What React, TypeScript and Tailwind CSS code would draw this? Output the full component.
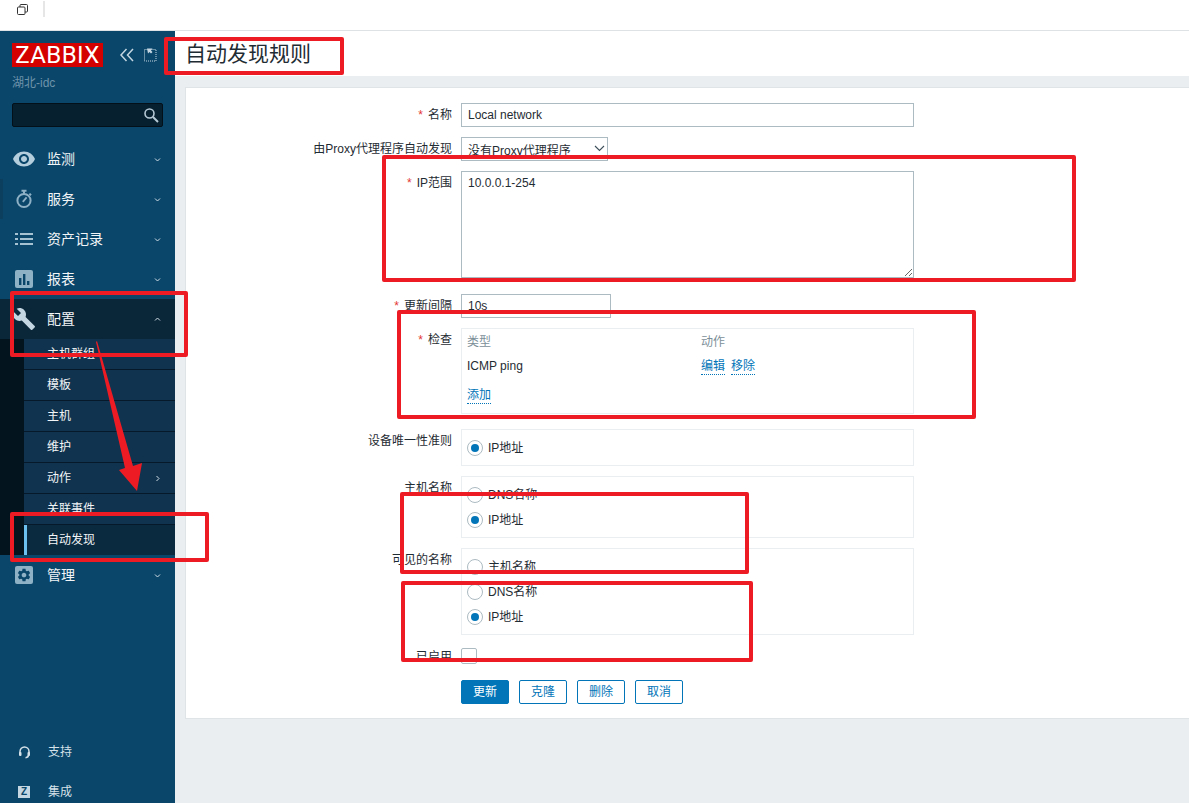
import React from 'react';

const FONT = { fontFamily: '"Liberation Sans", "Noto Sans CJK SC", sans-serif' };

const Chevron: React.FC<{ up?: boolean; right?: boolean }> = ({ up, right }) => (
  <svg width="9" height="9" viewBox="0 0 9 9" fill="none" stroke="#d0dde6" strokeWidth="1" className="shrink-0">
    {up ? <path d="M2 5.500 4.500 3 7 5.500" /> : right ? <path d="M3.500 2 6 4.500 3.500 7" /> : <path d="M2 3.500 4.500 6 7 3.500" />}
  </svg>
);

const icons: Record<string, React.ReactNode> = {
  eye: (
    <svg width="24" height="24" viewBox="0 0 24 24" fill="#b5cedd">
      <path d="M12 4.5C7 4.5 2.73 7.61 1 12c1.73 4.39 6 7.5 11 7.5s9.27-3.11 11-7.5c-1.73-4.39-6-7.5-11-7.5zM12 17c-2.76 0-5-2.24-5-5s2.24-5 5-5 5 2.24 5 5-2.24 5-5 5zm0-8c-1.66 0-3 1.34-3 3s1.34 3 3 3 3-1.34 3-3-1.34-3-3-3z" />
    </svg>
  ),
  timer: (
    <svg width="24" height="24" viewBox="0 0 24 24" fill="none" stroke="#8fb1c6" strokeWidth="2">
      <circle cx="12" cy="13.5" r="6.6" />
      <path d="M9.500 3.800h5M12 3.800v3M17.400 6.600l1.600 1.600" />
      <path d="M10.800 14.800l3.800-4.400" strokeWidth="1.800" />
    </svg>
  ),
  list: (
    <svg width="24" height="24" viewBox="0 0 24 24" fill="#a5c2d3">
      <rect x="3" y="6" width="3" height="2" />
      <rect x="8" y="6" width="13" height="2" />
      <rect x="3" y="11" width="3" height="2" />
      <rect x="8" y="11" width="13" height="2" />
      <rect x="3" y="16" width="3" height="2" />
      <rect x="8" y="16" width="13" height="2" />
    </svg>
  ),
  chart: (
    <svg width="24" height="24" viewBox="0 0 24 24">
      <rect x="3" y="3" width="18" height="18" rx="2" fill="#8fb1c6" />
      <path d="M7 11h2.400v7H7zM11 7h2.400v11H11zM15 14h2.400v4H15z" fill="#0a466a" />
    </svg>
  ),
  wrench: (
    <svg width="24" height="24" viewBox="0 0 24 24" fill="#c3d6e1">
      <path d="M22.7 19l-9.1-9.1c.9-2.3.4-5-1.5-6.9-2-2-5-2.400-7.400-1.300L9 6 6 9 1.600 4.700C.4 7.100.9 10.100 2.900 12.100c1.900 1.900 4.600 2.400 6.900 1.500l9.100 9.100c.4.4 1 .4 1.400 0l2.300-2.300c.5-.4.5-1.100.1-1.400z" />
    </svg>
  ),
  gear: (
    <svg width="24" height="24" viewBox="0 0 24 24">
      <rect x="3" y="3" width="18" height="18" rx="2" fill="#8fb1c6" />
      <g transform="translate(4.2 4.2) scale(0.65)">
        <path
          fill="#0a466a"
          d="M19.14 12.94c.04-.3.06-.61.06-.94 0-.32-.02-.64-.07-.94l2.03-1.58c.18-.14.23-.41.12-.61l-1.92-3.32c-.12-.22-.37-.29-.59-.22l-2.39.96c-.5-.38-1.03-.7-1.62-.94l-.36-2.54c-.04-.24-.24-.41-.48-.41h-3.84c-.24 0-.43.17-.47.41l-.36 2.54c-.59.24-1.13.57-1.62.94l-2.39-.96c-.22-.08-.47 0-.59.22L2.74 8.87c-.12.21-.08.47.12.61l2.03 1.58c-.05.3-.09.63-.09.94s.02.64.07.94l-2.03 1.58c-.18.14-.23.41-.12.61l1.92 3.32c.12.22.37.29.59.22l2.39-.96c.5.38 1.03.7 1.62.94l.36 2.54c.05.24.24.41.48.41h3.84c.24 0 .44-.17.47-.41l.36-2.54c.59-.24 1.13-.56 1.62-.94l2.39.96c.22.08.47 0 .59-.22l1.92-3.32c.12-.22.07-.47-.12-.61l-2.01-1.58zM12 15.6c-1.98 0-3.6-1.62-3.6-3.6s1.62-3.6 3.6-3.6 3.6 1.62 3.6 3.6-1.62 3.6-3.6 3.6z"
        />
      </g>
    </svg>
  ),
};

const NavItem: React.FC<{ icon: string; label: string; open?: boolean; mark?: boolean }> = ({ icon, label, open, mark }) => (
  <div className={`h-10 flex items-center pl-3 pr-[13px] text-sm text-[#f2f5f7] ${open ? 'bg-[#0a2639]' : ''} ${mark ? 'shadow-[inset_3px_0_0_#0c3e5d]' : ''}`}>
    <span className="w-[35px] shrink-0">{icons[icon]}</span>
    <span className="flex-1">{label}</span>
    <Chevron up={open} />
  </div>
);

const SubItem: React.FC<{ label: string; arrow?: boolean; active?: boolean; last?: boolean }> = ({ label, arrow, active, last }) => (
  <div
    className={`flex items-center pr-[13px] text-xs text-[#f2f5f7] ${last ? 'h-[30px]' : 'h-[31px] border-b border-[#06192a]'} ${
      active ? 'bg-[#0a2a3f] border-l-[3px] border-l-[#6cc0f0] pl-5' : 'bg-[#10344f] pl-[23px]'
    }`}
  >
    <span className="flex-1">{label}</span>
    {arrow && <Chevron right />}
  </div>
);

const Row: React.FC<{ label: string; required?: boolean; className?: string; children: React.ReactNode }> = ({ label, required, className, children }) => (
  <div className={`flex ${className ?? ''}`}>
    <div className="w-[275px] shrink-0 pr-[9px] h-6 leading-6 text-right text-xs text-[#1f2c33] whitespace-nowrap">
      {required && <span className="text-[#e33734] mr-[5px]">*</span>}
      {label}
    </div>
    <div className="min-w-0">{children}</div>
  </div>
);

const Radio: React.FC<{ label: string; checked?: boolean }> = ({ label, checked }) => (
  <div className="h-[25px] flex items-center gap-[5px] text-xs text-[#1f2c33]">
    <span className="w-4 h-4 rounded-full border border-[#acbbc2] flex items-center justify-center bg-white">
      {checked && <span className="w-2 h-2 rounded-full bg-[#0275b8]" />}
    </span>
    {label}
  </div>
);

const RadioBox: React.FC<{ children: React.ReactNode }> = ({ children }) => (
  <div className="w-[453px] border border-[#ebeef0] py-[5px] pl-[5px]">{children}</div>
);

const inputCls = 'block h-6 border border-[#acbbc2] px-1.5 text-xs text-[#1f2c33] bg-white outline-none';

const DotLink: React.FC<{ children: React.ReactNode }> = ({ children }) => (
  <span className="text-xs text-[#0275b8] border-b border-dotted border-[#0275b8] leading-[15px] inline-block">{children}</span>
);

const Btn: React.FC<{ children: React.ReactNode; primary?: boolean }> = ({ children, primary }) => (
  <button
    className={`w-12 h-6 rounded-[2px] text-xs border border-[#0275b8] ${primary ? 'bg-[#0275b8] text-white' : 'bg-white text-[#0275b8]'}`}
  >
    {children}
  </button>
);

const App: React.FC = () => {
  return (
    <div className="relative h-[803px] overflow-hidden flex flex-col bg-white" style={FONT}>
      {/* browser bar */}
      <div className="h-[31px] shrink-0 border-b border-[#dfe2e5] flex items-start pl-[17px] pt-[3px] gap-[15px]">
        <svg width="11" height="11" viewBox="0 0 11 11" fill="none" stroke="#333" strokeWidth="1" className="mt-px">
          <rect x="0.5" y="3" width="7.500" height="7.500" rx="1" />
          <path d="M3 3V1.500a1 1 0 0 1 1-1h5.500a1 1 0 0 1 1 1V7a1 1 0 0 1-1 1H8" />
        </svg>
        <div className="w-0.5 h-4 bg-[#e6e6e6] -mt-0.5" />
      </div>

      <div className="flex-1 flex min-h-0">
        {/* sidebar */}
        <aside className="w-[175px] shrink-0 bg-[#0a466a] flex flex-col overflow-hidden">
          <div className="h-[72px] shrink-0 pl-3 pt-3">
            <div className="flex items-center">
              <div className="w-[91px] h-6 bg-[#d40000] text-white text-2xl leading-6 text-center font-['Roboto',sans-serif] font-normal tracking-[0.4px]">ZABBIX</div>
              <svg width="16" height="16" viewBox="0 0 16 16" fill="none" stroke="#c3d6e1" strokeWidth="1.500" className="ml-4">
                <path d="M7.500 2 2 8l5.500 6M14 2 8.500 8l5.500 6" />
              </svg>
              <svg width="13" height="14" viewBox="0 0 13 14" fill="none" stroke="#c3d6e1" strokeWidth="1" className="ml-[9px]">
                <rect x="0.5" y="1.500" width="11.500" height="11.500" strokeDasharray="1 1" />
                <path d="M3 0.500h5.500L7 2.500l1.500 1.500L7 5.500 5.500 4 4 5.500z" fill="#c3d6e1" stroke="none" />
              </svg>
            </div>
            <div className="mt-[9px] text-xs leading-[14px] text-[#6d93aa]">湖北-idc</div>
          </div>
          <div className="mx-3 h-6 shrink-0 rounded-[2px] bg-[#06202f] border border-[#031019] flex items-center justify-end pr-[3px]">
            <svg width="16" height="16" viewBox="0 0 16 16" fill="none" stroke="#b5c9d5" strokeWidth="1.600">
              <circle cx="6.500" cy="6.500" r="4.500" />
              <path d="M10 10l5 5" strokeWidth="2" />
            </svg>
          </div>
          <nav className="mt-3 flex flex-col">
            <NavItem icon="eye" label="监测" />
            <NavItem icon="timer" label="服务" mark />
            <NavItem icon="list" label="资产记录" />
            <NavItem icon="chart" label="报表" />
            <NavItem icon="wrench" label="配置" open />
            <div className="flex">
              <div className="w-6 shrink-0 bg-[#04141e]" />
              <div className="flex-1 flex flex-col">
                <SubItem label="主机群组" />
                <SubItem label="模板" />
                <SubItem label="主机" />
                <SubItem label="维护" />
                <SubItem label="动作" arrow />
                <SubItem label="关联事件" />
                <SubItem label="自动发现" active last />
              </div>
            </div>
            <NavItem icon="gear" label="管理" />
          </nav>
          <div className="mt-auto flex flex-col -mb-[9px]">
            <div className="h-10 shrink-0 flex items-center pl-[18px] text-xs text-[#d5e1e8]">
              <svg width="13" height="13" viewBox="0 0 13 13" fill="none" stroke="#d5e1e8" strokeWidth="1.500" className="mr-[17px]">
                <path d="M2 7V5.500a4.500 4.500 0 0 1 9 0V7M10.500 9c0 1.500-1 2.500-3 2.700" />
                <rect x="1" y="6" width="2.500" height="4" rx="1" fill="#d5e1e8" stroke="none" />
                <rect x="9.500" y="6" width="2.500" height="4" rx="1" fill="#d5e1e8" stroke="none" />
              </svg>
              支持
            </div>
            <div className="h-10 shrink-0 flex items-center pl-[18px] text-xs text-[#d5e1e8]">
              <span className="w-3 h-3 mr-[18px] bg-[#c3d6e1] text-[#0a466a] text-[10px] leading-3 font-bold text-center">Z</span>
              集成
            </div>
          </div>
        </aside>

        {/* main */}
        <main className="flex-1 min-w-0 bg-[#ebeef0]">
          <div className="h-[45px] bg-white pl-[10px] flex items-center text-[21px] text-[#1f2c33]">自动发现规则</div>
          <div className="ml-2.5 mt-[11px] bg-white border border-[#dfe4e7] border-r-0 pt-[15px] pb-[14px] flex flex-col gap-2.5">
            <Row label="名称" required>
              <input className={`${inputCls} w-[453px]`} defaultValue="Local network" />
            </Row>
            <Row label="由Proxy代理程序自动发现">
              <div className="relative w-[147px]">
                <select className={`${inputCls} w-full appearance-none pt-[3px]`} defaultValue="none">
                  <option value="none">没有Proxy代理程序</option>
                </select>
                <svg width="11" height="7" viewBox="0 0 11 7" fill="none" stroke="#3d4f5a" strokeWidth="1.100" className="absolute right-[3px] top-[8px]">
                  <path d="M1 1l4.500 4.500L10 1" />
                </svg>
              </div>
            </Row>
            <Row label="IP范围" required>
              <textarea
                className="block w-[453px] h-[107px] border border-[#acbbc2] px-1.5 py-[3px] text-xs text-[#1f2c33] outline-none resize"
                defaultValue="10.0.0.1-254"
              />
            </Row>
            <Row label="更新间隔" required className="mt-1.5">
              <input className={`${inputCls} w-[150px]`} defaultValue="10s" />
            </Row>
            <Row label="检查" required>
              <div className="w-[453px] h-[86px] border border-[#ebeef0] pl-[5px] pt-1.5 text-xs">
                <div className="flex h-[14px] items-center text-[#7c8f99]">
                  <span className="w-[234px]">类型</span>
                  <span>动作</span>
                </div>
                <div className="flex mt-[10px] h-[15px] items-center text-[#1f2c33]">
                  <span className="w-[234px] -mt-px">ICMP ping</span>
                  <span className="flex gap-1.5">
                    <DotLink>编辑</DotLink>
                    <DotLink>移除</DotLink>
                  </span>
                </div>
                <div className="mt-[13px]">
                  <DotLink>添加</DotLink>
                </div>
              </div>
            </Row>
            <Row label="设备唯一性准则" className="mt-[5px]">
              <RadioBox>
                <Radio label="IP地址" checked />
              </RadioBox>
            </Row>
            <Row label="主机名称">
              <RadioBox>
                <Radio label="DNS名称" />
                <Radio label="IP地址" checked />
              </RadioBox>
            </Row>
            <Row label="可见的名称">
              <RadioBox>
                <Radio label="主机名称" />
                <Radio label="DNS名称" />
                <Radio label="IP地址" checked />
              </RadioBox>
            </Row>
            <div className="flex mt-[3px] items-center h-4">
              <div className="w-[275px] shrink-0 pr-[9px] pt-0.5 text-right text-xs text-[#1f2c33]">已启用</div>
              <span className="w-4 h-4 border border-[#acbbc2] rounded-[2px] bg-white" />
            </div>
            <div className="flex gap-2.5 pl-[275px] mt-1.5">
              <Btn primary>更新</Btn>
              <Btn>克隆</Btn>
              <Btn>删除</Btn>
              <Btn>取消</Btn>
            </div>
          </div>
        </main>
      </div>

      {/* red annotations drawn over the screenshot */}
      <div className="absolute left-[164px] top-[37px] w-[180px] h-[38px] border-4 border-[#ed1c24] rounded-[2px]" />
      <div className="absolute left-[10px] top-[291px] w-[178px] h-[66px] border-4 border-[#ed1c24] rounded-[2px]" />
      <div className="absolute left-[10px] top-[512px] w-[199px] h-[50px] border-4 border-[#ed1c24] rounded-[2px]" />
      <div className="absolute left-[382px] top-[155px] w-[694px] h-[127px] border-4 border-[#ed1c24] rounded-[2px]" />
      <div className="absolute left-[397px] top-[310px] w-[579px] h-[109px] border-4 border-[#ed1c24] rounded-[2px]" />
      <div className="absolute left-[400px] top-[492px] w-[349px] h-[82px] border-4 border-[#ed1c24] rounded-[2px]" />
      <div className="absolute left-[401px] top-[581px] w-[352px] h-[81px] border-4 border-[#ed1c24] rounded-[2px]" />
      <svg width="60" height="160" viewBox="0 0 60 160" className="absolute left-[90px] top-[336px]">
        <path d="M6 6 35 132 29 134 47 155 52 127 43 130 7 5z" fill="#ed1c24" />
      </svg>
    </div>
  );
};

export default App;
